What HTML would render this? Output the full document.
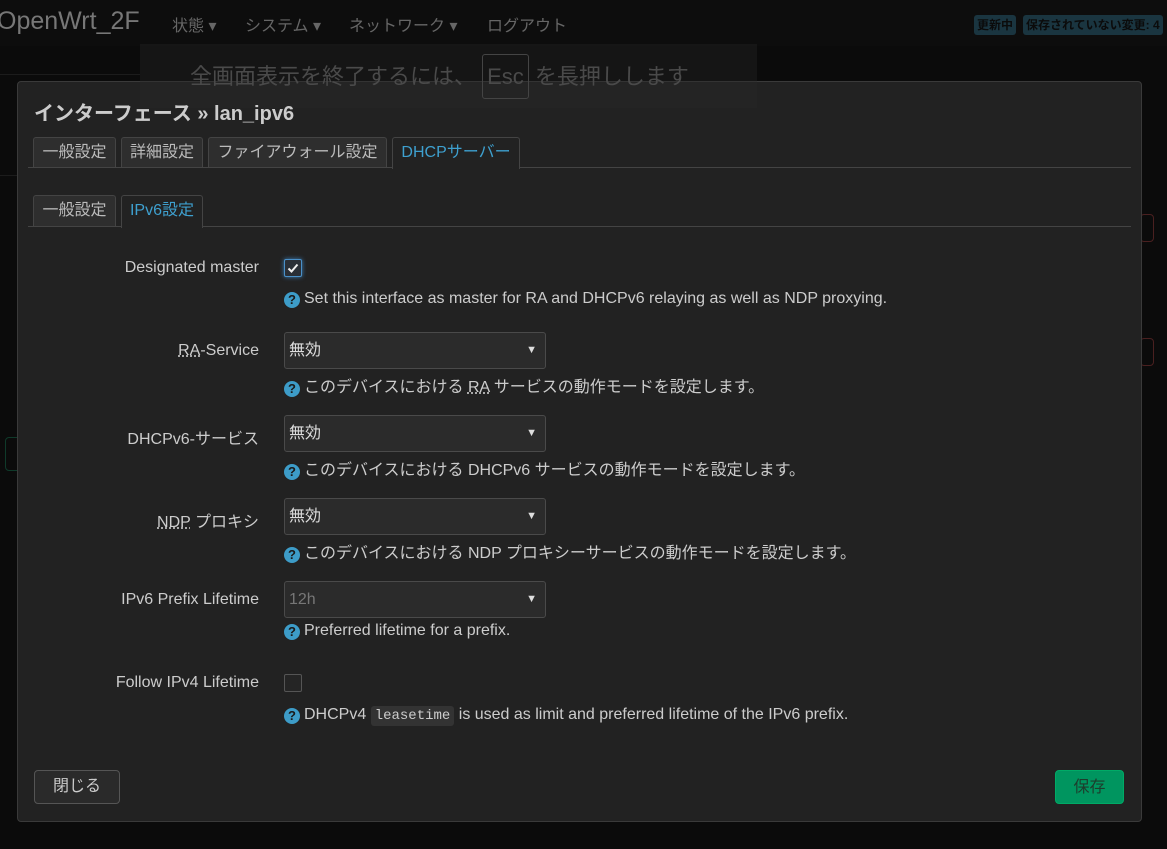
<!DOCTYPE html><html><head><meta charset="utf-8"><style>
body{margin:0;width:1167px;height:849px;background:#0b0b0b;font-family:"Liberation Sans","Noto Sans CJK JP",sans-serif;position:relative;overflow:hidden;color:#ccc}
.a{position:absolute;white-space:nowrap}
.nav{left:0;top:0;width:1167px;height:46px;background:#0d0d0d}
.menu{font-size:16px;color:#666;top:12px}
.badge{top:15px;height:20px;line-height:20px;font-size:12px;font-weight:bold;color:#0b0b0b;background:#1a3540;border-radius:3px;padding:0 3px}
.modal{left:17px;top:81px;width:1123px;height:739px;background:#222;border:1px solid #3a3a3a;border-radius:4px}
.tab{height:29px;line-height:29px;font-size:16px;color:#bbb;background:#2e2e2e;border:1px solid #444;border-bottom:none;border-radius:3px 3px 0 0;text-align:center}
.tab.on{background:#222;color:#3ea0cf}
.line{height:1px;background:#444}
.lbl{font-size:16px;color:#ccc;right:908px;text-align:right}
.help{font-size:16px;color:#ccc;left:284px}
.q{display:inline-block;width:16px;height:16px;border-radius:50%;background:#3d9cc8;color:#1a1a1a;font-size:13px;font-weight:bold;text-align:center;line-height:16px;vertical-align:-1px;margin-right:4px}
.sel{left:284px;width:262px;height:37px;border:1px solid #4a4a4a;border-radius:3px;background:#2b2b2b;font-size:16px;line-height:36px;color:#ddd;box-sizing:border-box;padding-left:4px}
.sel:after{content:"▼";position:absolute;right:8px;top:-1px;font-size:11px;color:#ddd}
.cb{left:284px;width:16px;height:16px;border:1px solid #555;border-radius:2px;background:#252525}
abbr{text-decoration:underline dotted;}
code{font-family:"Liberation Mono",monospace;font-size:14px;background:#333;padding:2px 4px;border-radius:3px}
.btn{height:32px;line-height:32px;font-size:16px;border-radius:4px;text-align:center;box-sizing:border-box}
</style></head><body>
<div class="a nav"></div>
<div class="a" style="left:-3px;top:7px;font-size:25px;color:#777">OpenWrt_2F</div>
<div class="a menu" style="left:172px">状態 ▾</div>
<div class="a menu" style="left:245px">システム ▾</div>
<div class="a menu" style="left:349px">ネットワーク ▾</div>
<div class="a menu" style="left:487px">ログアウト</div>
<div class="a badge" style="left:974px">更新中</div>
<div class="a badge" style="left:1023px">保存されていない変更: 4</div>
<div class="a" style="left:0;top:74px;width:140px;height:100px;border-top:1px solid #1c1c1c;border-bottom:1px solid #1c1c1c"></div>
<div class="a" style="left:5px;top:437px;width:14px;height:32px;border:1px solid #0f3a2a;border-radius:4px"></div>
<div class="a" style="left:1140px;top:214px;width:12px;height:26px;border:1px solid #4a2020;border-radius:4px"></div>
<div class="a" style="left:1140px;top:338px;width:12px;height:26px;border:1px solid #4a2020;border-radius:4px"></div>
<div class="a modal"></div>
<div class="a" style="left:140px;top:44px;width:617px;height:64px;background:rgba(40,40,40,0.35)"></div>
<div class="a" style="left:190px;top:63px;font-size:22px;line-height:28px;color:#4a4a4a">全画面表示を終了するには、 <span style="border:1px solid #444;border-radius:3px;padding:9px 4px">Esc</span> を長押しします</div>
<div class="a" style="left:34px;top:97px;font-size:20px;font-weight:bold;color:#ccc">インターフェース » lan_ipv6</div>
<div class="a line" style="left:28px;top:167px;width:1103px"></div>
<div class="a tab" style="left:33px;top:137px;width:81px">一般設定</div>
<div class="a tab" style="left:121px;top:137px;width:80px">詳細設定</div>
<div class="a tab" style="left:208px;top:137px;width:177px">ファイアウォール設定</div>
<div class="a tab on" style="left:392px;top:137px;width:126px;height:31px">DHCPサーバー</div>
<div class="a line" style="left:28px;top:226px;width:1103px"></div>
<div class="a tab" style="left:33px;top:195px;width:81px;height:30px">一般設定</div>
<div class="a tab on" style="left:121px;top:195px;width:80px;height:32px">IPv6設定</div>

<div class="a lbl" style="top:259px">Designated master</div>
<div class="a cb" style="top:259px;border-color:#4a90c8;box-shadow:0 0 5px #3d7fb8;background:#2a2f36"><svg width="16" height="16" viewBox="0 0 16 16" style="position:absolute;left:0;top:0"><path d="M3.5 8.5l3 3 6-7" stroke="#eee" stroke-width="2" fill="none"/></svg></div>
<div class="a help" style="top:290px"><span class="q">?</span>Set this interface as master for RA and DHCPv6 relaying as well as NDP proxying.</div>

<div class="a lbl" style="top:342px"><abbr>RA</abbr>-Service</div>
<div class="a sel" style="top:332px">無効</div>
<div class="a help" style="top:373px"><span class="q">?</span>このデバイスにおける <abbr>RA</abbr> サービスの動作モードを設定します。</div>

<div class="a lbl" style="top:425px">DHCPv6-サービス</div>
<div class="a sel" style="top:415px">無効</div>
<div class="a help" style="top:456px"><span class="q">?</span>このデバイスにおける DHCPv6 サービスの動作モードを設定します。</div>

<div class="a lbl" style="top:508px"><abbr>NDP</abbr> プロキシ</div>
<div class="a sel" style="top:498px">無効</div>
<div class="a help" style="top:539px"><span class="q">?</span>このデバイスにおける NDP プロキシーサービスの動作モードを設定します。</div>

<div class="a lbl" style="top:591px">IPv6 Prefix Lifetime</div>
<div class="a sel" style="top:581px;color:#777">12h</div>
<div class="a help" style="top:622px"><span class="q">?</span>Preferred lifetime for a prefix.</div>

<div class="a lbl" style="top:674px">Follow IPv4 Lifetime</div>
<div class="a cb" style="top:674px"></div>
<div class="a help" style="top:706px"><span class="q">?</span>DHCPv4 <code>leasetime</code> is used as limit and preferred lifetime of the IPv6 prefix.</div>

<div class="a btn" style="left:34px;top:770px;width:86px;height:34px;line-height:32px;border:1px solid #555;background:#2a2a2a;color:#ccc">閉じる</div>
<div class="a btn" style="left:1055px;top:770px;width:69px;height:34px;line-height:34px;background:#00955f;border:1px solid #0a6;color:#1d3d2c">保存</div>
</body></html>
